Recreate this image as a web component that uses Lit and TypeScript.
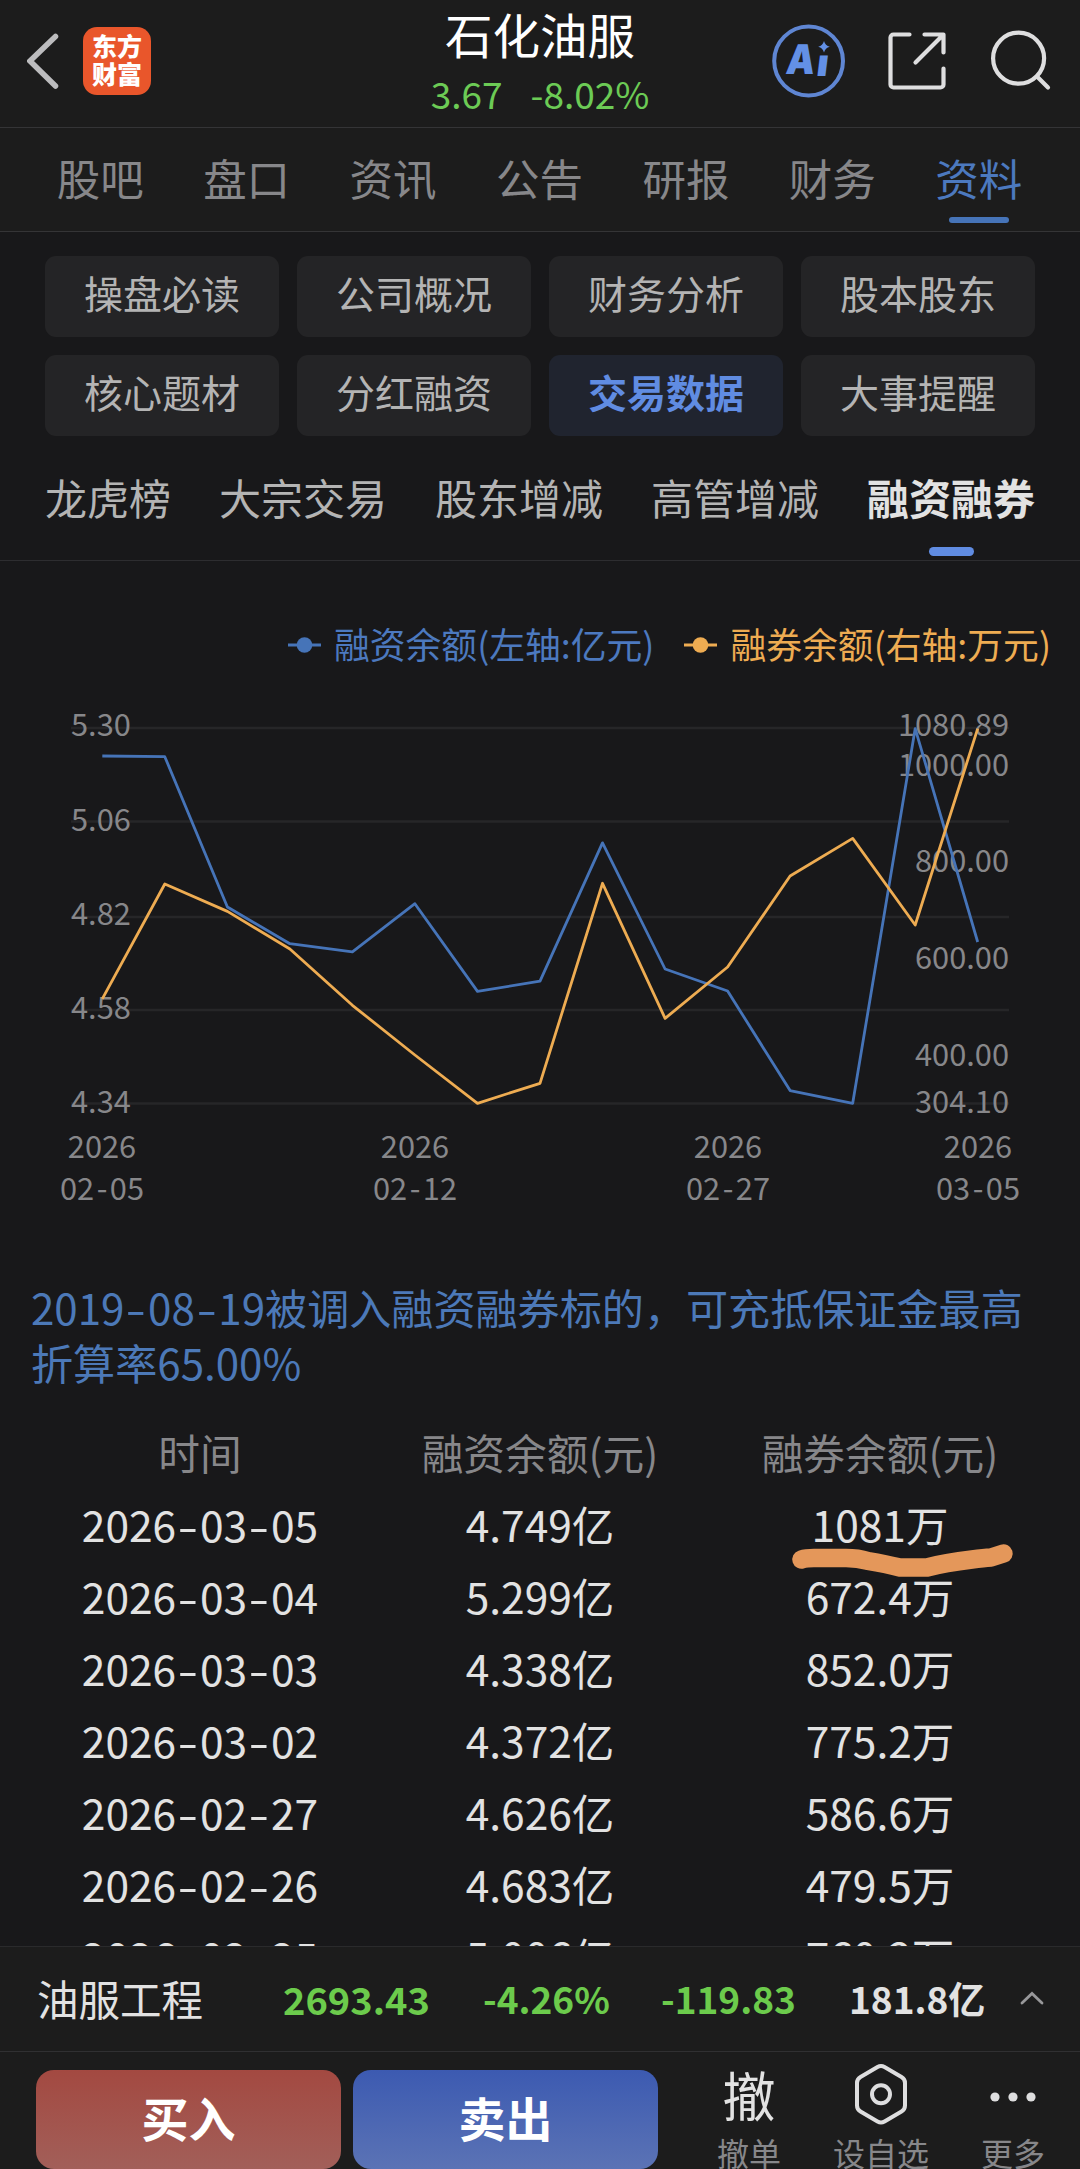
import { LitElement, html, svg, css } from "lit";
import { customElement } from "lit/decorators.js";
import { classMap } from "lit/directives/class-map.js";

const BLUE = "#4674b8";
const ORANGE = "#eeac52";

/** Splits a date on its hyphens so that each can take the width of a digit. */
const dashed = (text: string) =>
  text.split("-").map((part, i) => (i ? html`<span class="dash">-</span>${part}` : part));

@customElement("balance-chart")
export class BalanceChart extends LitElement {
  static styles = css`
    :host { display: block; height: 560px; }
    svg { display: block; }
    .axis { font: 30.8px "Noto Sans CJK SC", sans-serif; fill: #87878a; }
    .end { text-anchor: end; }
    .mid { text-anchor: middle; }
    .grid { stroke: #262628; stroke-width: 2.5; }
    .series { fill: none; stroke-width: 2.8; stroke-linejoin: round; }
  `;

  private left: [string, number][] = [["5.30", 736], ["5.06", 831], ["4.82", 925], ["4.58", 1019], ["4.34", 1113]];
  private right: [string, number][] = [["1080.89", 736], ["1000.00", 776], ["800.00", 872], ["600.00", 969], ["400.00", 1066], ["304.10", 1113]];
  private dates: [string, string, number][] = [["02", "05", 102], ["02", "12", 415], ["02", "27", 728], ["03", "05", 978]];
  private margin = [756, 756.7, 907, 943.7, 951.8, 903.7, 991.4, 981.2, 842.9, 969, 991, 1090.6, 1103.3, 728.6, 942];
  private lending = [998.8, 884, 911.4, 949, 1005.3, 1055, 1103.3, 1083.3, 883.3, 1018.4, 967, 876, 838.4, 925, 728.6];

  private points(ys: number[]) {
    return ys.map((y, i) => `${(102.3 + i * 62.53).toFixed(1)},${y}`).join(" ");
  }

  render() {
    return html`<svg width="1080" height="560" viewBox="0 668 1080 560">
      ${[728, 821.5, 917, 1010, 1103.5].map((y) => svg`<line class="grid" x1="71" x2="1009" y1=${y} y2=${y} />`)}
      ${this.left.map(([t, y]) => svg`<text class="axis" x="71" y=${y}>${t}</text>`)}
      ${this.right.map(([t, y]) => svg`<text class="axis end" x="1009" y=${y}>${t}</text>`)}
      ${this.dates.map(([m, d, x]) => svg`
        <text class="axis mid" x=${x} y="1158">2026</text>
        <text class="axis mid" x=${x} y="1200">${m}<tspan dx="2.5">-</tspan><tspan dx="2.5">${d}</tspan></text>`)}
      <polyline class="series" stroke=${BLUE} points=${this.points(this.margin)} />
      <polyline class="series" stroke=${ORANGE} points=${this.points(this.lending)} />
    </svg>`;
  }
}

@customElement("app-root")
export class AppRoot extends LitElement {
  static styles = css`
    :host {
      display: flex; flex-direction: column; height: 2169px; width: 1080px; overflow: hidden;
      background: #18181a; color: #e2e2e2; font-family: "Noto Sans CJK SC", sans-serif;
      white-space: nowrap;
    }
    * { box-sizing: border-box; }
    svg { display: block; flex: none; }
    .dash { display: inline-block; width: 0.56em; text-align: center; transform: scaleX(1.4); }

    .header {
      flex: none; height: 128px; display: grid; grid-template-columns: 1fr auto 1fr;
      background: #1c1c1c; border-bottom: 1px solid #343436; padding: 0 28px 0 27px;
    }
    .side { display: flex; align-items: center; height: 121px; }
    .side.right { justify-content: flex-end; }
    .logo {
      margin-left: 24px; width: 68px; height: 68px; border-radius: 14px; background: #e9562b;
      display: flex; flex-direction: column; align-items: center; justify-content: center;
      font-size: 25px; line-height: 28px; font-weight: 900; color: #fff; padding-bottom: 3px;
    }
    .title { text-align: center; padding-left: 1px; }
    .name { font-size: 47.5px; line-height: 68px; color: #fff; }
    .quote { display: flex; justify-content: center; gap: 28px; font-size: 37px; line-height: 51px; color: #6ccb55; }
    .ai { font: 900 41px Inter, sans-serif; fill: #6390e6; }
    .share { margin: 0 44px 0 42px; }

    .tabs {
      flex: none; height: 104px; display: grid; grid-template-columns: repeat(7, 1fr);
      background: #1c1c1c; border-bottom: 1px solid #343436; padding: 0 28px 0 27px;
      font-size: 43.5px; color: #87878a; text-align: center;
    }
    .tab { display: flex; flex-direction: column; align-items: center; line-height: 79px; padding-top: 10px; }
    .tab.on { color: #4c79bf; }
    .tab.on::after { content: ""; width: 60px; height: 6px; border-radius: 3px; background: #4674b8; }

    .chips { flex: none; display: grid; grid-template-columns: repeat(4, 234px); gap: 18px; padding: 24px 45px 0; }
    .chip {
      height: 81px; border-radius: 11px; background: #242426; color: #b4b4b4;
      text-align: center; font-size: 39px; line-height: 72px;
    }
    .chip.on { background: #20242f; color: #608ce2; font-weight: 700; }

    .subtabs {
      flex: none; display: flex; gap: 48px; height: 125px; padding: 29px 45px 0;
      border-bottom: 1px solid #2d2d30; font-size: 42px; line-height: 64px; color: #b4b4b4;
    }
    .subtab { display: flex; flex-direction: column; align-items: center; }
    .subtab.on { color: #e2e2e2; font-weight: 700; }
    .subtab.on::after { content: ""; margin-top: 18px; width: 45px; height: 9px; border-radius: 5px; background: #608ce2; }

    .legend {
      flex: none; display: flex; justify-content: flex-end; gap: 30px; margin-top: 57px; height: 50px;
      padding-right: 29px; font-size: 35.8px; line-height: 50px;
    }
    .key { display: flex; gap: 12px; }
    .key svg { margin-top: 19px; }
    .key.margin { color: #4c79bf; }
    .key.lending { color: #eeac52; }

    .note {
      flex: none; padding: 0 40px 0 31px; margin-top: 51px; font-size: 42.1px; line-height: 55px;
      color: #4c79b8; white-space: normal; word-break: break-all;
    }
    .table { flex: 1; min-height: 0; overflow: hidden; padding: 27px 30px 0; position: relative; }
    .row { display: grid; grid-template-columns: repeat(3, 340px); text-align: center; height: 72px; font-size: 42.5px; line-height: 71px; }
    .row.head { color: #87878a; font-size: 41.7px; line-height: 73px; }
    .mark { position: absolute; left: 780px; top: 151px; }

    .ticker {
      flex: none; height: 105px; display: grid; grid-template-columns: 246px 200px 178px 188px 1fr; align-items: center;
      background: #1c1c1c; border-top: 1px solid #2a2a2c; padding: 0 0 2px 37px; font-size: 37px; font-weight: 700;
    }
    .sector { font-size: 41.5px; font-weight: 400; }
    .index { font-size: 38px; }
    .down { color: #6ccb4c; }
    .last { display: flex; align-items: center; justify-content: space-between; padding-right: 35px; }

    .actions { flex: none; height: 118px; display: flex; background: #1c1c1c; border-top: 1px solid #303032; padding: 18px 0 0 36px; }
    .trade {
      width: 305px; height: 99px; border-radius: 18px; margin-right: 12px; color: #fff;
      font-size: 47px; font-weight: 700; line-height: 94px; text-align: center;
    }
    .buy { background: linear-gradient(#a34941, #a25f59); }
    .sell { background: linear-gradient(#3c5ab1, #5b73b5); }
    .tools { display: grid; grid-template-columns: repeat(3, 132px); margin: -7px 0 0 13px; }
    .tool { display: flex; flex-direction: column; align-items: center; font-size: 32px; line-height: 40px; color: #87878a; }
    .glyph { height: 69px; display: flex; align-items: flex-start; color: #e2e2e2; font-size: 53px; line-height: 62px; }
  `;

  private tabs = ["股吧", "盘口", "资讯", "公告", "研报", "财务", "资料"];
  private chips = ["操盘必读", "公司概况", "财务分析", "股本股东", "核心题材", "分红融资", "交易数据", "大事提醒"];
  private subtabs = ["龙虎榜", "大宗交易", "股东增减", "高管增减", "融资融券"];
  private rows = [
    ["2026-03-05", "4.749亿", "1081万"],
    ["2026-03-04", "5.299亿", "672.4万"],
    ["2026-03-03", "4.338亿", "852.0万"],
    ["2026-03-02", "4.372亿", "775.2万"],
    ["2026-02-27", "4.626亿", "586.6万"],
    ["2026-02-26", "4.683亿", "479.5万"],
    ["2026-02-25", "5.006亿", "760.2万"],
  ];

  private key(color: string) {
    return html`<svg width="34" height="16" viewBox="0 0 34 16">
      <line x1="0" x2="33" y1="8" y2="8" stroke=${color} stroke-width="3" />
      <circle cx="16.5" cy="8" r="7.8" fill=${color} />
    </svg>`;
  }

  render() {
    return html`
      <div class="header">
        <div class="side">
          <svg width="32" height="60" viewBox="27 30.5 32 60" fill="none" stroke="#bcbcbe" stroke-width="5.5" stroke-linecap="round">
            <path d="M55.5 36 30 60.5 55.5 85.5" />
          </svg>
          <div class="logo"><span>东方</span><span>财富</span></div>
        </div>
        <div class="title">
          <div class="name">石化油服</div>
          <div class="quote"><span>3.67</span><span>-8.02%</span></div>
        </div>
        <div class="side right">
          <svg width="74" height="74" viewBox="772 23.5 74 74">
            <circle cx="808.6" cy="60.5" r="34.4" fill="none" stroke="#5f86d3" stroke-width="4" />
            <text class="ai" transform="translate(785 73.5) skewX(-7) scale(.88 1)">A</text>
            <text class="ai" transform="translate(815.5 75.5) skewX(-7) scale(.98 .92)">ı</text>
            <path d="M824 40.500q1.200 4.500 5.800 5.800-4.600 1.200-5.800 5.800-1.200-4.600-5.800-5.800 4.600-1.300 5.800-5.800z" fill="#6390e6" />
          </svg>
          <svg class="share" width="58" height="58" viewBox="887.5 31.5 58 58" fill="none" stroke="#dededf" stroke-width="4.2" stroke-linecap="round" stroke-linejoin="round">
            <path d="M909 34H893a3 3 0 0 0-3 3V84a3 3 0 0 0 3 3H940a3 3 0 0 0 3-3V68M924 34H943V52M942 35 915 62" />
          </svg>
          <svg width="62" height="62" viewBox="990 29.5 62 62" fill="none" stroke="#dededf" stroke-width="4.2" stroke-linecap="round">
            <circle cx="1018.6" cy="57.7" r="25.5" /><path d="M1037 76 1048 87" />
          </svg>
        </div>
      </div>

      <div class="tabs">
        ${this.tabs.map((t) => html`<div class=${classMap({ tab: true, on: t === "资料" })}>${t}</div>`)}
      </div>

      <div class="chips">
        ${this.chips.map((t) => html`<div class=${classMap({ chip: true, on: t === "交易数据" })}>${t}</div>`)}
      </div>

      <div class="subtabs">
        ${this.subtabs.map((t) => html`<div class=${classMap({ subtab: true, on: t === "融资融券" })}>${t}</div>`)}
      </div>

      <div class="legend">
        <div class="key margin">${this.key(BLUE)}<span>融资余额(左轴:亿元)</span></div>
        <div class="key lending">${this.key(ORANGE)}<span>融券余额(右轴:万元)</span></div>
      </div>
      <balance-chart></balance-chart>

      <div class="note">${dashed("2019-08-19")}被调入融资融券标的，可充抵保证金最高折算率65.00%</div>

      <div class="table">
        <div class="row head"><span>时间</span><span>融资余额(元)</span><span>融券余额(元)</span></div>
        ${this.rows.map(([d, a, b]) => html`<div class="row"><span>${dashed(d)}</span><span>${a}</span><span>${b}</span></div>`)}
        <svg class="mark" width="250" height="50" viewBox="780 1540 250 50" fill="none" stroke="#e4975a" stroke-width="18.5" stroke-linecap="round" stroke-linejoin="round">
          <path d="M801.5 1559.5Q806 1558 814 1558H846Q858 1558 868 1561C880 1563 890 1565 900 1567.5H927C940 1564 955 1561.5 972 1559.500Q984 1558 991 1557.500L1003.5 1553.500" />
        </svg>
      </div>

      <div class="ticker">
        <span class="sector">油服工程</span>
        <span class="down index">2693.43</span>
        <span class="down">-4.26%</span>
        <span class="down">-119.83</span>
        <span class="last">181.8亿
          <svg width="26" height="16" viewBox="0 0 26 16" fill="none" stroke="#98989a" stroke-width="2.8" stroke-linecap="round">
            <path d="M3 13 13 3.5 23 13" />
          </svg>
        </span>
      </div>

      <div class="actions">
        <div class="trade buy">买入</div>
        <div class="trade sell">卖出</div>
        <div class="tools">
          <div class="tool"><span class="glyph">撤</span>撤单</div>
          <div class="tool">
            <span class="glyph"><svg width="56" height="62" viewBox="0 -0.5 56 62" fill="none" stroke="#dededf" stroke-width="4">
              <path d="M24.5 3.5Q28 1.5 31.5 3.5L48.5 13.5Q52 15.5 52 19.5V42Q52 46 48.5 48L31.5 58Q28 60 24.5 58L7.5 48Q4 46 4 42V19.5Q4 15.5 7.5 13.5Z" />
              <circle cx="28" cy="30.8" r="9" />
            </svg></span>设自选
          </div>
          <div class="tool">
            <span class="glyph"><svg width="46" height="66" viewBox="0 0 46 66" fill="#dededf">
              <circle cx="5" cy="34" r="4.6" /><circle cx="23" cy="34" r="4.6" /><circle cx="41" cy="34" r="4.6" />
            </svg></span>更多
          </div>
        </div>
      </div>
    `;
  }
}
